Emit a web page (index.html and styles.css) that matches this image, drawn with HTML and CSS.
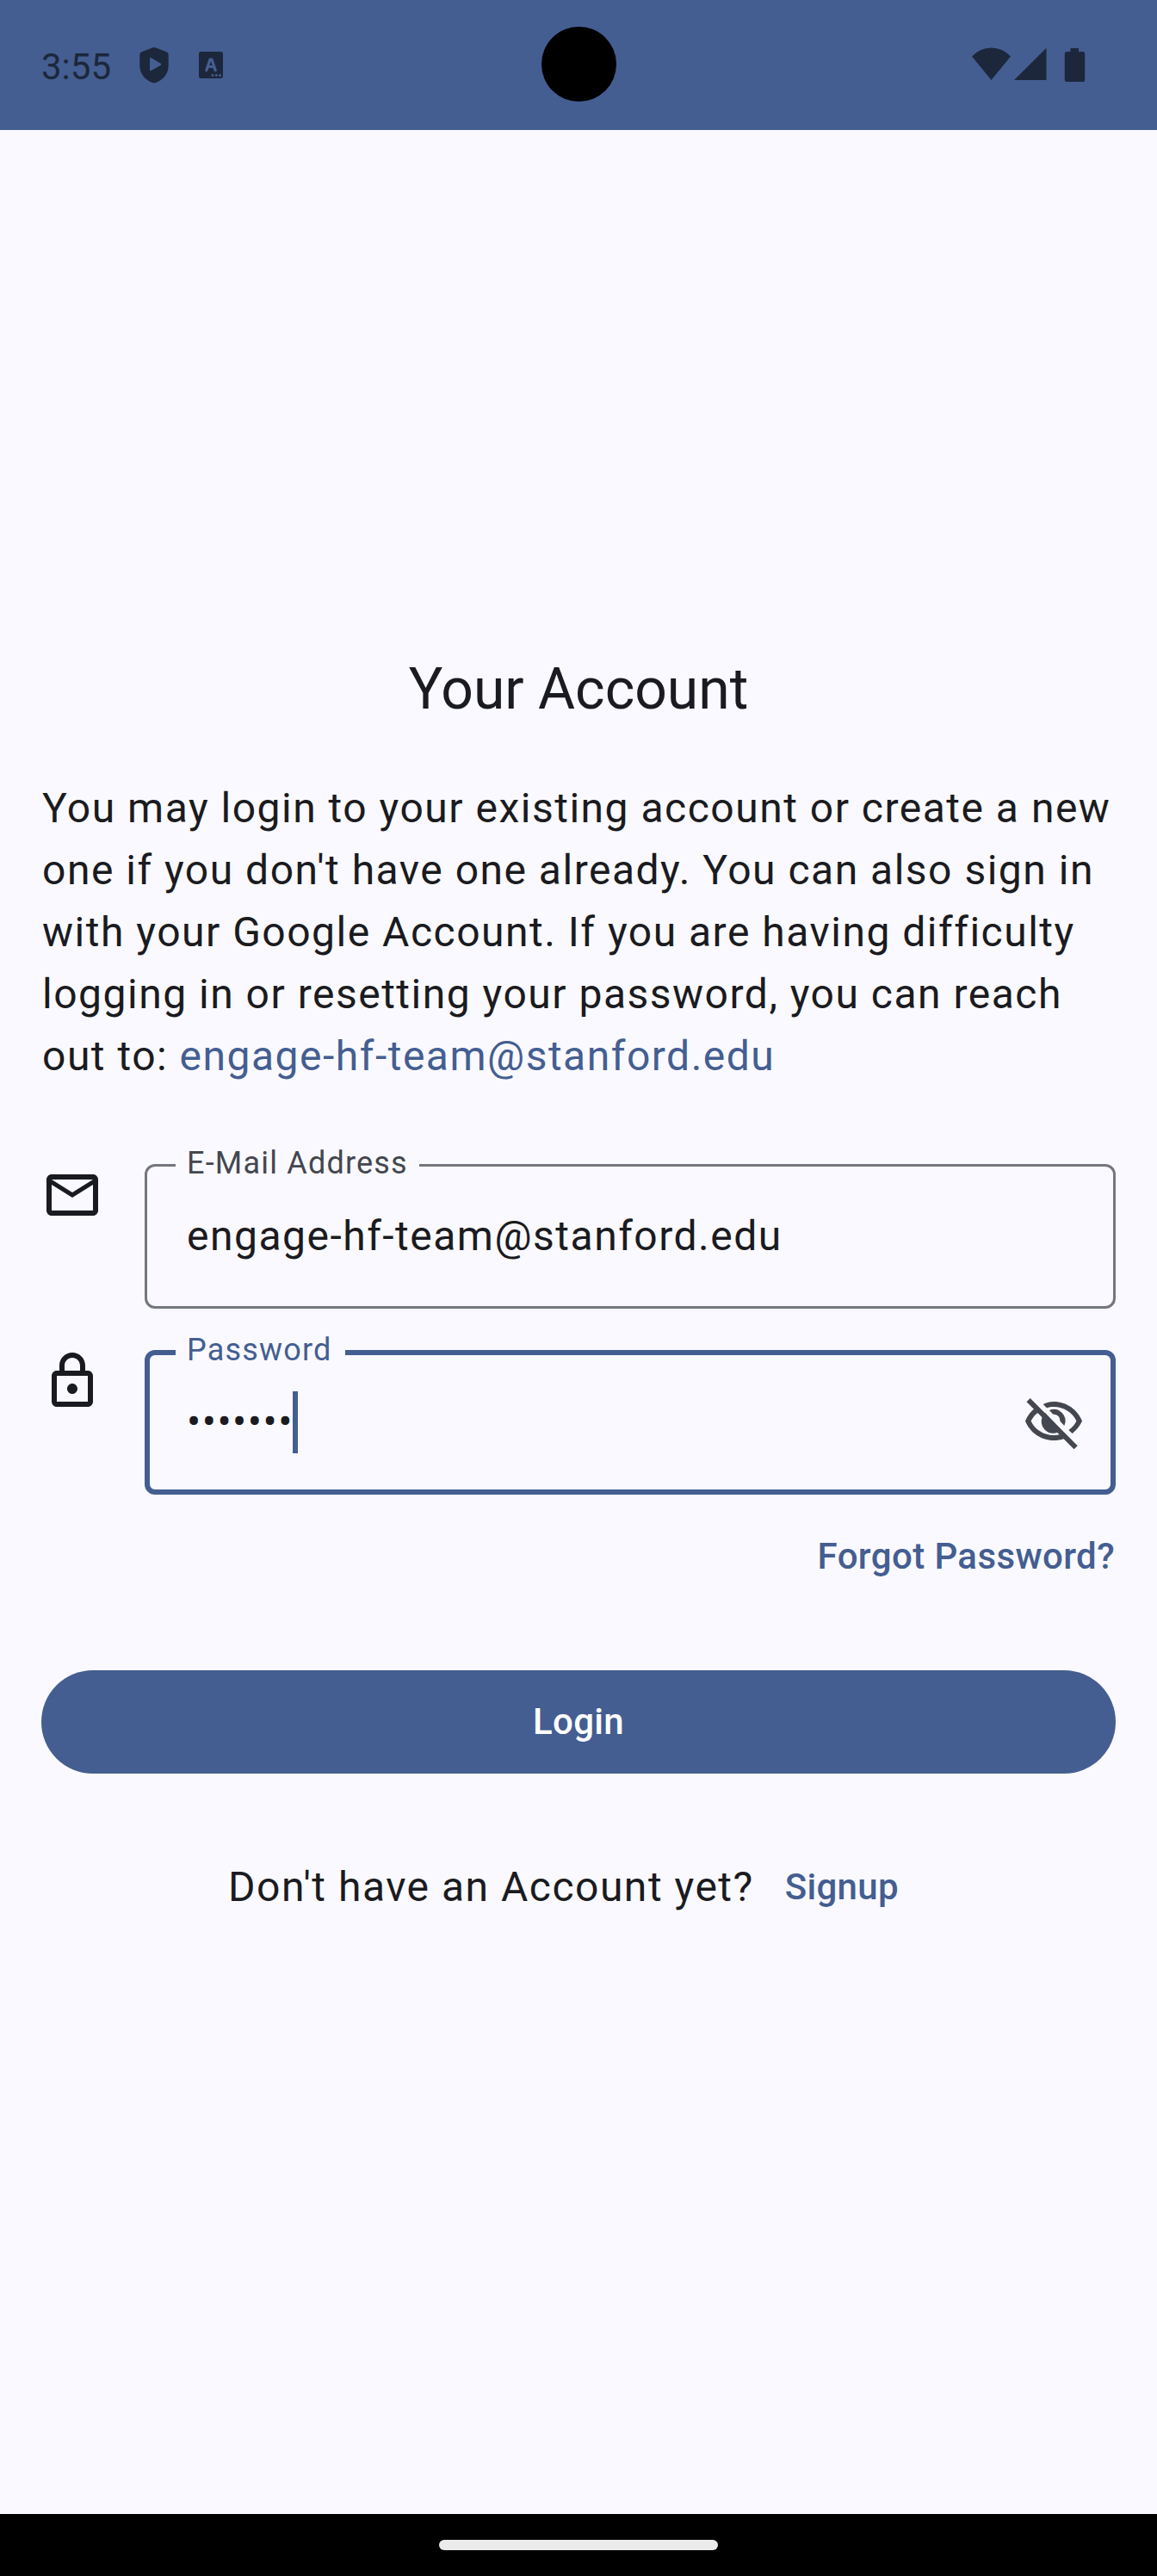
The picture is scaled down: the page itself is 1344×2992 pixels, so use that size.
FILE: index.html
```html
<!DOCTYPE html>
<html lang="en">
<head>
<meta charset="utf-8">
<title>Your Account</title>
<link rel="stylesheet" href="styles.css">
</head>
<body>
<div class="screen">
  <header class="status-bar">
    <span class="clock">3:55</span>
    <svg class="status-shield" viewBox="162 55 34 42" width="34" height="42"><path fill-rule="evenodd" d="M179 55q1 0 2.200.6l12.300 4.600q2.200.9 2.200 3.300v12c0 9.500-5 16.500-14 20.200q-2.700 1.200-5.400 0c-9-3.700-14-10.700-14-20.200v-12q0-2.400 2.200-3.300l12.300-4.600q1.200-.6 2.200-.6zM174 68.300v12.700q0 1.900 1.700 1l11-6.300q1.300-1 0-2l-11-6.400q-1.700-.9-1.700 1z"/></svg>
    <svg class="status-a" viewBox="231 60 28 31" width="28" height="31"><rect x="231" y="60" width="28" height="31" rx="2.500"/><path class="a-stroke" d="M239.800 81.700l4.200-12.700h2l4.200 12.700M242 77.500h6"/><circle class="a-dot" cx="247" cy="87.500" r="1.400"/><circle class="a-dot" cx="251.300" cy="87.500" r="1.400"/><circle class="a-dot" cx="255.600" cy="87.500" r="1.400"/></svg>
    <svg class="status-system" viewBox="1129 55 132 41" width="132" height="41"><path d="M1129 65.500q9.500-10 22.500-10t22.500 10L1151.500 93zM1178 93L1215.500 55.700V93zM1243.500 56h9.500v4h5q2.200 0 2.200 2.200v30.500q0 2.200-2.200 2.200h-19q-2.200 0-2.200-2.200V62.200q0-2.200 2.200-2.200h4.500z"/></svg>
    <span class="camera"></span>
  </header>
  <main class="content">
    <h1 class="title">Your Account</h1>
    <p class="intro">You may login to your existing account or create a new one if you don't have one already. You can also sign in with your Google Account. If you are having difficulty logging in or resetting your password, you can reach out to: <a class="mail-link">engage-hf-team@stanford.edu</a></p>
    <div class="field-row">
      <svg class="icon" viewBox="0 0 24 24"><path d="M22 6c0-1.100-.9-2-2-2H4c-1.100 0-2 .9-2 2v12c0 1.100.9 2 2 2h16c1.100 0 2-.9 2-2V6zm-2 0l-8 5-8-5h16zm0 12H4V8l8 5 8-5v10z"/></svg>
      <fieldset class="field"><legend>E-Mail Address</legend><span class="value">engage-hf-team@stanford.edu</span></fieldset>
    </div>
    <div class="field-row">
      <svg class="icon" viewBox="0 0 24 24"><path d="M18 8h-1V6c0-2.760-2.240-5-5-5S7 3.240 7 6v2H6c-1.100 0-2 .9-2 2v10c0 1.100.9 2 2 2h12c1.100 0 2-.9 2-2V10c0-1.100-.9-2-2-2zM9 6c0-1.660 1.340-3 3-3s3 1.340 3 3v2H9V6zm9 14H6V10h12v10zm-6-3c1.100 0 2-.9 2-2s-.9-2-2-2-2 .9-2 2 .9 2 2 2z"/></svg>
      <fieldset class="field focused"><legend>Password</legend><span class="value">•••••••</span><span class="cursor"></span>
        <svg class="eye" viewBox="0 0 24 24">
          <path d="M7.900 5C9.200 4.300 10.600 4 12 4c5 0 9.270 3.110 11 7.500-.8 1.900-2.100 3.500-3.800 4.800L17.800 15c1.300-.9 2.400-2.200 3-3.500C19.200 8.100 15.800 6 12 6c-1 0-1.800.1-2.700.4z"/>
          <path d="M4.700 6.500C3.060 7.830 1.770 9.530 1 11.500 2.730 15.890 7 19 12 19c1.400 0 2.800-.25 4-.7l-1.500-1.600c-.8.2-1.600.3-2.500.3-3.800 0-7.200-2.100-8.800-5.500.7-1.400 1.800-2.700 3.100-3.600z"/>
          <path d="M10.300 7.300A4.500 4.500 0 0 1 16.100 13.300L14.500 11.600A2.500 2.500 0 0 0 11.800 8.900z"/>
          <path d="M8.700 8.300A4.500 4.500 0 0 0 15 15z"/>
          <path d="M2.900 2.700L21.250 21.050 19.850 22.450 1.500 4.100z"/>
        </svg>
      </fieldset>
    </div>
    <div class="forgot"><a>Forgot Password?</a></div>
    <button class="login">Login</button>
    <div class="signup-row"><span>Don't have an Account yet?</span><a class="signup">Signup</a></div>
  </main>
  <footer class="nav-bar"><span class="handle"></span></footer>
</div>
</body>
</html>
```
FILE: styles.css
```css
* { box-sizing: border-box; }
body { margin: 0; font-family: Roboto, sans-serif; color: #1a1b20; background: #faf9ff; }
.screen { width: 1344px; height: 2992px; display: flex; flex-direction: column; }
.status-bar { position: relative; height: 151px; background: #445e91; fill: #1c273b; flex: none; display: flex; align-items: flex-start; padding: 0 83px 0 48px; }
.clock { font-size: 42px; line-height: 50px; margin-top: 53px; color: #1c273b; width: 114px; }
.status-shield { margin-top: 55px; }
.status-a { margin: 60px 0 0 35px; }
.a-stroke { fill: none; stroke: #445e91; stroke-width: 3.200; stroke-linecap: round; stroke-linejoin: round; }
.a-dot { fill: #445e91; }
.status-system { margin: 55px 0 0 auto; }
.camera { position: absolute; left: 628.500px; top: 31px; width: 87px; height: 87px; border-radius: 50%; background: #000; }
.content { flex: 1; padding: 608px 48px 0; display: flex; flex-direction: column; }
.title { margin: 0 0 60px; font-size: 66px; font-weight: 400; line-height: 84px; text-align: center; }
.intro { margin: 0 0 89px; padding-left: 1px; font-size: 48px; line-height: 72px; letter-spacing: 1.500px; }
.mail-link { color: #445e91; }
.field-row { display: flex; gap: 48px; height: 168px; margin-bottom: 48px; }
.icon { width: 72px; height: 72px; fill: #1a1b20; flex: none; }
.field { flex: 1; min-width: 0; height: 190px; margin: -22px 0 0; padding: 0 33px 23px 46px; border: 3px solid #74777f; border-radius: 12px; display: flex; align-items: center; }
.field legend { height: 47px; margin-left: -13px; padding: 0 13px; font-size: 36px; line-height: 43px; letter-spacing: 1.200px; color: #44474f; }
.value { font-size: 48px; line-height: 72px; letter-spacing: 1.500px; }
.focused { height: 189px; margin-top: -21px; border: 6px solid #445e91; padding: 0 30px 21px 43px; }
.focused legend { height: 48px; padding-right: 15px; line-height: 42px; color: #445e91; }
.cursor { width: 6px; height: 72px; margin-left: -1px; background: #445e91; }
.eye { width: 72px; height: 72px; margin-left: auto; fill: #44474f; }
.forgot { margin-top: -6px; padding-right: 1px; text-align: right; font-size: 42px; font-weight: 500; line-height: 60px; letter-spacing: .4px; color: #445e91; }
.login { margin-top: 102px; height: 120px; border: 0; border-radius: 60px; background: #445e91; color: #fff; font: 500 42px/60px Roboto, sans-serif; letter-spacing: .3px; }
.signup-row { margin: 96px 0 0 217px; display: flex; align-items: center; gap: 36px; font-size: 48px; line-height: 72px; letter-spacing: 1.500px; }
.signup { font-size: 42px; font-weight: 500; line-height: 60px; letter-spacing: .3px; color: #445e91; }
.nav-bar { height: 72px; flex: none; background: #000; display: flex; justify-content: center; align-items: center; }
.handle { width: 324px; height: 12px; border-radius: 6px; background: #ebebeb; }
```
